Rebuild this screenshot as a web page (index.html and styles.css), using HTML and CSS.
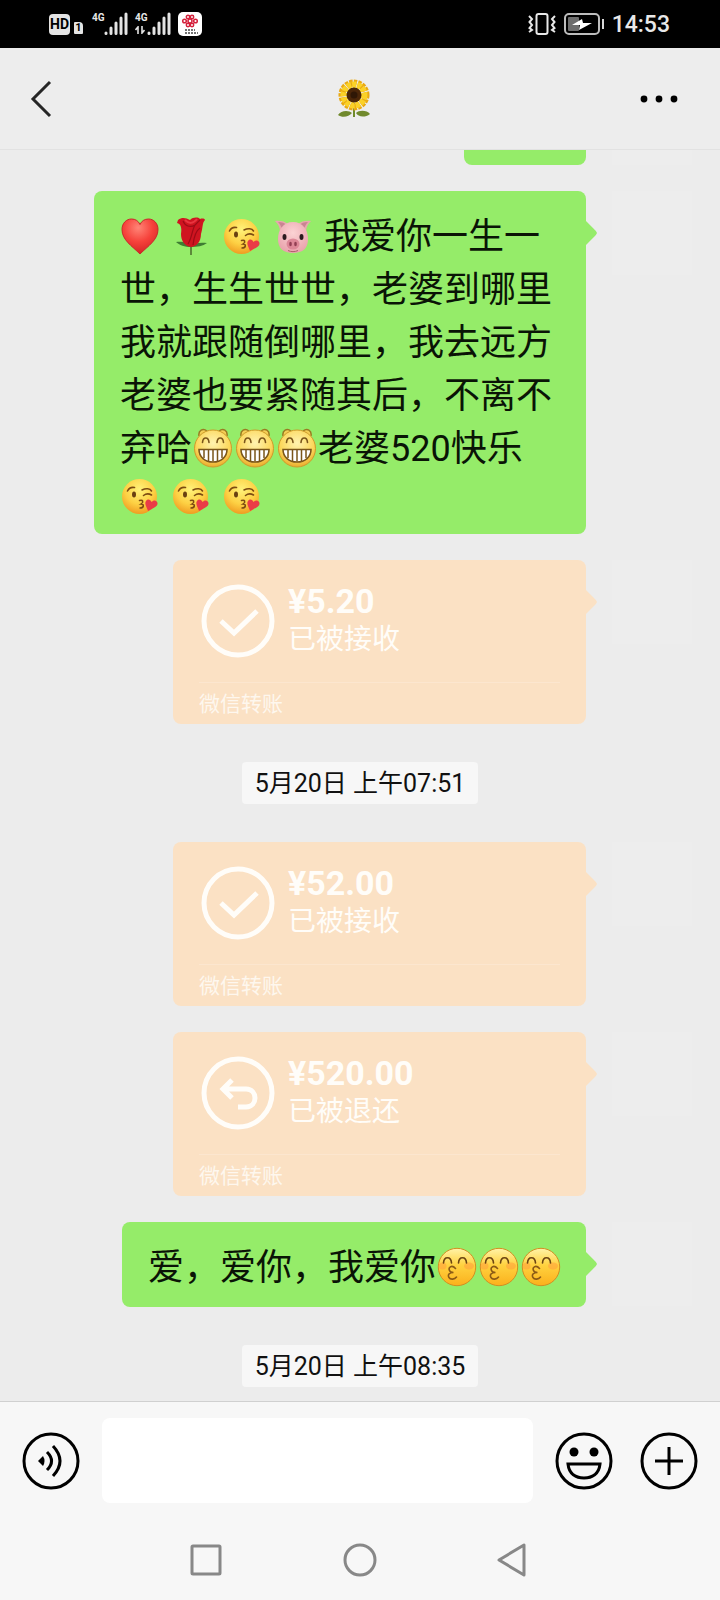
FILE: index.html
```html
<!DOCTYPE html>
<html lang="zh-CN">
<head>
    <meta charset="UTF-8">
    <meta name="viewport" content="width=device-width, initial-scale=1.0">
    <title>🌻</title>
    <link rel="stylesheet" href="styles.css">
</head>
<body>
    <!-- Shared drawings -->
    <svg class="defs" aria-hidden="true">
        <defs>
            <radialGradient id="face" cx="50%" cy="30%" r="70%">
                <stop offset="0" stop-color="#fff27a"/>
                <stop offset="0.6" stop-color="#fdd043"/>
                <stop offset="1" stop-color="#ef9d22"/>
            </radialGradient>
            <radialGradient id="face-light" cx="50%" cy="35%" r="65%">
                <stop offset="0" stop-color="#fff3b0"/>
                <stop offset="0.7" stop-color="#fcd75a"/>
                <stop offset="1" stop-color="#e9ab2c"/>
            </radialGradient>
            <linearGradient id="face-warm" x1="0" y1="0" x2="0" y2="1">
                <stop offset="0" stop-color="#fff3a8"/>
                <stop offset="0.45" stop-color="#ffd23f"/>
                <stop offset="1" stop-color="#fbb01c"/>
            </linearGradient>
            <radialGradient id="red" cx="45%" cy="25%" r="80%">
                <stop offset="0" stop-color="#ff8577"/>
                <stop offset="0.5" stop-color="#f6423b"/>
                <stop offset="1" stop-color="#cf1f22"/>
            </radialGradient>
            <radialGradient id="pink" cx="50%" cy="35%" r="65%">
                <stop offset="0" stop-color="#fbd3d4"/>
                <stop offset="1" stop-color="#e9a3ac"/>
            </radialGradient>

            <symbol id="heart" viewBox="0 0 40 40">
                <path d="M20 38C12 30 2 24 2 13.500C2 7 6.500 3 11.500 3C15.500 3 18.500 5 20 8.500C21.500 5 24.500 3 28.500 3C33.500 3 38 7 38 13.500C38 24 28 30 20 38Z" fill="url(#red)" stroke="#c9282a"/>
            </symbol>
            <symbol id="rose" viewBox="0 0 40 40">
                <path d="M20 27V39" stroke="#5c8a3a" stroke-width="2"/>
                <path d="M20 31C14 31 8 29 5 26C12 25 18 27 20 31C23 27 29 26 36 27C32 30 26 31 20 31Z" fill="#3f7d33"/>
                <path d="M7 4C11 1 15 2 19 4C22 1 27 1 29 3C32 2 34 3 34 4C31 7 32 12 30 18C30 26 25 31 20 31C13 30 10 24 10 18C11 12 10 8 6 7Z" fill="#cf1420"/>
                <path d="M12 5C14 10 19 12 24 9L29 4M24 9C21 14 21 22 17 28M29 12C26 14 23 20 22 29" fill="none" stroke="#9d0b16" stroke-width="1.200"/>
                <path d="M14 4C18 8 22 8 26 3" fill="none" stroke="#e8353f" stroke-width="2"/>
            </symbol>
            <symbol id="kiss" viewBox="0 0 40 40">
                <circle cx="19.500" cy="20.500" r="17.500" fill="url(#face)"/>
                <path d="M7.500 15C9 12 12 11 14.500 11.500M22 14C26 12 30 12.500 31.500 15M23.500 19.500C26 17.500 29 17.500 31.500 19" fill="none" stroke="#7c4b12" stroke-width="1.600" stroke-linecap="round"/>
                <ellipse cx="14" cy="18.500" rx="2" ry="3" fill="#6a4011"/>
                <path d="M19.500 24.500C23 23.500 24 26 21 28C24.500 28 24 32 20 32" fill="none" stroke="#7c4b12" stroke-width="1.500" stroke-linecap="round"/>
                <path d="M28 35C27 31 24 28 26 25C28 22.500 30.500 23.500 31.500 26C33.500 23.500 37 24 37.500 27C38 31 33 32 28 35Z" fill="#ea3c46"/>
            </symbol>
            <symbol id="pig" viewBox="0 0 40 40">
                <path d="M2 5C6 4 12 5 15 8L7 16C7 11 5 8 2 5ZM38 5C34 4 28 5 25 8L33 16C33 11 35 8 38 5Z" fill="#e9a6ae"/>
                <path d="M5 6C9 6 12 7 13 9L9 13C8 10 7 8 5 6ZM35 6C31 6 28 7 27 9L31 13C32 10 33 8 35 6Z" fill="#c98592"/>
                <path d="M20 6C30 6 35 14 35 23C35 32 30 37 20 37C10 37 5 32 5 23C5 14 10 6 20 6Z" fill="url(#pink)"/>
                <ellipse cx="11.500" cy="21" rx="2" ry="3" fill="#2a1a1e"/>
                <ellipse cx="28.500" cy="21" rx="2" ry="3" fill="#2a1a1e"/>
                <ellipse cx="20" cy="28" rx="6.500" ry="5.500" fill="#dd8797"/>
                <ellipse cx="17.500" cy="28" rx="1.300" ry="2.200" fill="#913e52"/>
                <ellipse cx="22.500" cy="28" rx="1.300" ry="2.200" fill="#913e52"/>
                <path d="M15 34.500C18 36 22 36 25 34.500" fill="none" stroke="#b25d6d"/>
            </symbol>
            <symbol id="grin" viewBox="0 0 40 40">
                <path d="M6 8C5 2 10 0 14 3M34 8C35 2 30 0 26 3" fill="#f4cf57" stroke="#9a7b22" stroke-width="1.500"/>
                <circle cx="20" cy="20.500" r="18.500" fill="url(#face-light)" stroke="#d19a2a"/>
                <path d="M9.500 14.500C10 8.500 15.500 8.500 16 14.500M24 14.500C24.500 8.500 30 8.500 30.500 14.500" fill="none" stroke="#7a551a" stroke-width="1.600" stroke-linecap="round"/>
                <path d="M6 21.500H34C34 29 28 34 20 34C12 34 6 29 6 21.500Z" fill="#fff" stroke="#7a551a" stroke-width="1.600"/>
                <path d="M11 22V30M15.500 22V33M20 22V33.500M24.500 22V33M29 22V30" stroke="#7a551a" stroke-width="1.500"/>
            </symbol>
            <symbol id="pout" viewBox="0 0 40 40">
                <circle cx="20" cy="20" r="18.700" fill="url(#face-warm)" stroke="#d18f22" stroke-width="1"/>
                <ellipse cx="5.500" cy="19" rx="4" ry="3.500" fill="#ff9a3d" opacity="0.500"/>
                <ellipse cx="32" cy="19" rx="5" ry="3.500" fill="#ff9a3d" opacity="0.500"/>
                <path d="M6.500 16C7 9 14 9 14.500 16M21.500 16C22 9 29 9 29.500 16" fill="none" stroke="#6b4412" stroke-width="1.600" stroke-linecap="round"/>
                <path d="M18.500 21.500C15 17.500 11 20 12.500 23.500C13 25 14.500 25.500 16.500 25.500C12 25.500 10.500 28 12 30.500C13.500 33 17.500 32.500 19.500 30" fill="none" stroke="#8a5a16" stroke-width="1.600" stroke-linecap="round"/>
            </symbol>
            <symbol id="check" viewBox="0 0 74 74">
                <circle cx="37" cy="37" r="34" fill="none" stroke="currentColor" stroke-width="5"/>
                <path d="M20 37L33 49L56 27" fill="none" stroke="currentColor" stroke-width="5"/>
            </symbol>
            <symbol id="returned" viewBox="0 0 74 74">
                <circle cx="37" cy="37" r="34" fill="none" stroke="currentColor" stroke-width="5"/>
                <path d="M31 24L22 33L31 42M23 33H45C57 33 57 51 45 51H37" fill="none" stroke="currentColor" stroke-width="5"/>
            </symbol>
            <symbol id="bars" viewBox="0 0 24 24">
                <path d="M2 21V21.500M7 16V21.500M12 11V21.500M17 6V21.500M22 2V21.500" stroke="#e4e4e4" stroke-width="3" stroke-linecap="round"/>
            </symbol>
        </defs>
    </svg>

    <div class="app">
        <div class="status-bar">
            <div class="status-left">
                <span class="hd">HD</span>
                <span class="sim">1</span>
                <span class="signal"><span class="net">4G</span><svg class="bars"><use href="#bars"/></svg></span>
                <span class="signal">
                    <span class="net">4G
                        <svg class="updown" viewBox="0 0 10 8"><path d="M0.500 4L3 1V8M7 0V7L9.500 4" fill="none" stroke="#e4e4e4" stroke-width="1.600"/></svg>
                    </span>
                    <svg class="bars"><use href="#bars"/></svg>
                </span>
                <svg class="carrier" viewBox="0 0 24 24">
                    <rect width="24" height="24" rx="5" fill="#fff"/>
                    <g fill="none" stroke="#d5203b" stroke-width="1.500">
                        <circle cx="12" cy="9" r="2"/>
                        <circle cx="10" cy="5" r="1.700"/><circle cx="14" cy="5" r="1.700"/>
                        <circle cx="6.500" cy="9" r="1.800"/><circle cx="17.500" cy="9" r="1.800"/>
                        <circle cx="10" cy="13" r="1.700"/><circle cx="14" cy="13" r="1.700"/>
                    </g>
                    <path d="M7 18H17M7 21H20" stroke="#444" stroke-width="1.500" stroke-dasharray="2 1"/>
                </svg>
            </div>
            <div class="status-right">
                <svg class="vibrate" viewBox="0 0 28 24">
                    <rect x="8.500" y="2" width="11" height="20" rx="2" fill="none" stroke="#e8e8e8" stroke-width="2"/>
                    <path d="M1 4L4 7L1.500 10L4 13L1.500 16L4 18L1 20M27 4L24 7L26.500 10L24 13L26.500 16L24 18L27 20" fill="none" stroke="#e8e8e8" stroke-width="2"/>
                </svg>
                <svg class="battery" viewBox="0 0 40 22">
                    <rect x="1" y="1" width="34" height="20" rx="4" fill="none" stroke="#bdbdbd" stroke-width="2"/>
                    <rect x="4" y="4" width="11" height="14" rx="1" fill="#6d6d6d"/>
                    <path d="M18 6L8 12H16L15 17L28 10H19Z" fill="#fff"/>
                    <path d="M39 6V16" stroke="#d8d8d8" stroke-width="2"/>
                </svg>
                <time class="clock">14:53</time>
            </div>
        </div>

        <header class="header">
            <button class="icon-btn back" aria-label="返回">
                <svg viewBox="0 0 22 38"><path d="M20 2L3 19L20 36" fill="none" stroke="#262626" stroke-width="3"/></svg>
            </button>
            <h1 class="title">
                <svg viewBox="0 0 34 40" role="img" aria-label="🌻">
                    <path d="M17 24V38" stroke="#6f8a2b" stroke-width="2"/>
                    <path d="M1 36C4 31 12 31 15 34C12 38 5 39 1 36ZM33 35C30 31 22 31 19 34C21 38 28 39 33 35Z" fill="#70892d"/>
                    <circle cx="17" cy="16" r="12" fill="none" stroke="#e9a914" stroke-width="7" stroke-dasharray="3 1"/>
                    <circle cx="17" cy="16" r="10" fill="none" stroke="#fbd127" stroke-width="7" stroke-dasharray="4 1"/>
                    <circle cx="17" cy="16" r="7.500" fill="#4b2609"/>
                    <circle cx="17" cy="16" r="3.500" fill="#2f1706"/>
                </svg>
            </h1>
            <button class="icon-btn more" aria-label="更多">
                <svg viewBox="0 0 38 8"><circle cx="4" cy="4" r="3.400"/><circle cx="19" cy="4" r="3.400"/><circle cx="34" cy="4" r="3.400"/></svg>
            </button>
        </header>

        <main class="chat">
            <div class="row">
                <div class="bubble-end"></div>
                <div class="avatar-end"></div>
            </div>

            <div class="row">
                <div class="bubble">
                    <svg class="emoji spaced"><use href="#heart"/></svg><svg class="emoji spaced"><use href="#rose"/></svg><svg class="emoji spaced"><use href="#kiss"/></svg><svg class="emoji spaced"><use href="#pig"/></svg>我爱你一生一世，生生世世，老婆到哪里我就跟随倒哪里，我去远方老婆也要紧随其后，不离不弃哈<svg class="emoji wide"><use href="#grin"/></svg><svg class="emoji wide"><use href="#grin"/></svg><svg class="emoji wide"><use href="#grin"/></svg>老婆520快乐
                    <div class="emoji-line"><svg class="emoji spaced"><use href="#kiss"/></svg><svg class="emoji spaced"><use href="#kiss"/></svg><svg class="emoji spaced"><use href="#kiss"/></svg></div>
                </div>
                <div class="avatar"></div>
            </div>

            <div class="row">
                <div class="transfer">
                    <div class="transfer-main">
                        <svg class="transfer-icon"><use href="#check"/></svg>
                        <div>
                            <div class="amount">¥5.20</div>
                            <div class="state">已被接收</div>
                        </div>
                    </div>
                    <div class="transfer-foot">微信转账</div>
                </div>
                <div class="avatar"></div>
            </div>

            <time class="stamp">5月20日 上午07:51</time>

            <div class="row">
                <div class="transfer">
                    <div class="transfer-main">
                        <svg class="transfer-icon"><use href="#check"/></svg>
                        <div>
                            <div class="amount">¥52.00</div>
                            <div class="state">已被接收</div>
                        </div>
                    </div>
                    <div class="transfer-foot">微信转账</div>
                </div>
                <div class="avatar"></div>
            </div>

            <div class="row">
                <div class="transfer">
                    <div class="transfer-main">
                        <svg class="transfer-icon"><use href="#returned"/></svg>
                        <div>
                            <div class="amount">¥520.00</div>
                            <div class="state">已被退还</div>
                        </div>
                    </div>
                    <div class="transfer-foot">微信转账</div>
                </div>
                <div class="avatar"></div>
            </div>

            <div class="row">
                <div class="bubble">爱，爱你，我爱你<svg class="emoji wide"><use href="#pout"/></svg><svg class="emoji wide"><use href="#pout"/></svg><svg class="emoji wide"><use href="#pout"/></svg></div>
                <div class="avatar"></div>
            </div>

            <time class="stamp">5月20日 上午08:35</time>
        </main>

        <footer class="footer">
            <div class="composer">
                <button class="icon-btn" aria-label="语音">
                    <svg class="tool" viewBox="0 0 58 58">
                        <circle cx="29" cy="29" r="27" fill="none" stroke="#000" stroke-width="3"/>
                        <path d="M16 29L21 24Q24 29 21 34Z"/>
                        <path d="M25 20Q34 29 25 38M31 14Q45 29 31 44" fill="none" stroke="#000" stroke-width="3"/>
                    </svg>
                </button>
                <input class="message" type="text" aria-label="消息">
                <button class="icon-btn" aria-label="表情">
                    <svg class="tool" viewBox="0 0 58 58">
                        <circle cx="29" cy="29" r="27" fill="none" stroke="#000" stroke-width="3"/>
                        <circle cx="19" cy="20" r="4.500"/><circle cx="39" cy="20" r="4.500"/>
                        <path d="M13 32H45C44 42 37 46 29 46C21 46 14 42 13 32Z" fill="none" stroke="#000" stroke-width="3"/>
                    </svg>
                </button>
                <button class="icon-btn" aria-label="添加">
                    <svg class="tool" viewBox="0 0 58 58">
                        <circle cx="29" cy="29" r="27" fill="none" stroke="#000" stroke-width="3"/>
                        <path d="M29 15V43M15 29H43" stroke="#000" stroke-width="3"/>
                    </svg>
                </button>
            </div>
            <nav class="system-nav">
                <button class="icon-btn" aria-label="最近任务"><svg viewBox="0 0 34 34"><rect x="3" y="3" width="28" height="28" rx="1"/></svg></button>
                <button class="icon-btn" aria-label="主页"><svg viewBox="0 0 34 34"><circle cx="17" cy="17" r="15"/></svg></button>
                <button class="icon-btn" aria-label="后退"><svg viewBox="0 0 34 34"><path d="M27 2V32L2 17Z"/></svg></button>
            </nav>
        </footer>
    </div>
</body>
</html>
```

FILE: styles.css
```css
* {
    box-sizing: border-box;
}

body {
    margin: 0;
    background: #ececec;
    color: #0a1406;
    font-family: Roboto, "Noto Sans CJK SC", sans-serif;
}

.defs {
    position: absolute;
    width: 0;
    height: 0;
}

.app {
    display: flex;
    flex-direction: column;
    min-height: 100vh;
}

.icon-btn {
    display: flex;
    padding: 0;
    border: 0;
    background: none;
}

/* Status bar */
.status-bar {
    display: flex;
    justify-content: space-between;
    align-items: center;
    height: 48px;
    padding: 0 50px 0 49px;
    background: #000;
    color: #e8e8e8;
}

.status-left,
.status-right {
    display: flex;
    align-items: center;
}

.hd {
    width: 21px;
    margin-right: 4px;
    border-radius: 4px;
    background: #e4e4e4;
    color: #000;
    font-size: 14px;
    font-weight: bold;
    line-height: 21px;
    text-align: center;
}

.sim {
    align-self: flex-end;
    width: 9px;
    margin: 0 9px 2px 0;
    border-radius: 1px 4px 1px 1px;
    background: #e4e4e4;
    color: #000;
    font-size: 11px;
    font-weight: bold;
    line-height: 12px;
    text-align: center;
}

.signal {
    display: flex;
    margin-right: 7px;
}

.net {
    width: 12px;
    font-size: 10px;
    font-weight: bold;
    line-height: 12px;
}

.updown {
    display: block;
    width: 10px;
    height: 8px;
    margin-top: 2px;
}

.bars,
.carrier {
    width: 24px;
    height: 24px;
}

.vibrate {
    width: 28px;
    height: 24px;
    margin-right: 8px;
}

.battery {
    width: 40px;
    height: 22px;
    margin-right: 8px;
}

.clock {
    font-size: 23px;
    font-weight: 500;
}

/* Header */
.header {
    display: grid;
    grid-template-columns: 1fr auto 1fr;
    align-items: center;
    height: 102px;
    padding: 0 42px 0 30px;
    border-bottom: 1px solid #e2e2e2;
    background: #ededed;
}

.back svg {
    width: 22px;
    height: 38px;
}

.title {
    display: flex;
    margin: 0;
}

.title svg {
    width: 34px;
    height: 40px;
}

.more {
    justify-self: end;
}

.more svg {
    width: 38px;
    height: 8px;
}

/* Messages */
.chat {
    display: flex;
    flex: 1;
    flex-direction: column;
    gap: 26px;
    padding-bottom: 14px;
}

.row {
    display: flex;
    justify-content: flex-end;
    align-items: flex-start;
    gap: 26px;
    padding: 0 28px 0 94px;
}

.avatar,
.avatar-end {
    flex: none;
    width: 80px;
    background: #ededed;
}

.avatar {
    height: 84px;
}

.avatar-end {
    height: 15px;
}

.bubble-end {
    width: 122px;
    height: 15px;
    border-radius: 0 0 8px 8px;
    background: #95ec69;
}

.bubble,
.transfer {
    position: relative;
    border-radius: 8px;
}

.bubble {
    padding: 20px 24px 12px 26px;
    background: #95ec69;
    font-size: 36px;
    line-height: 53px;
}

.transfer {
    width: 413px;
    background: #fbe1c4;
    color: #fffdf9;
}

/* Arrow towards the avatar */
.bubble::after,
.transfer::after {
    content: '';
    position: absolute;
    top: 30px;
    left: 100%;
    width: 11px;
    height: 24px;
    background: inherit;
    clip-path: polygon(0 0, 90% 42%, 100% 50%, 90% 58%, 0 100%);
}

.emoji {
    width: 40px;
    height: 40px;
    vertical-align: -7px;
}

.spaced {
    margin-right: 11px;
}

.wide {
    margin: 0 1px;
}

.emoji-line {
    height: 46px;
    line-height: 40px;
}

/* Transfer cards */
.transfer-main {
    display: flex;
    gap: 13px;
    margin: 0 26px;
    padding: 22px 0 22px 2px;
    border-bottom: 1px solid #fce6cf;
}

.transfer-icon {
    width: 74px;
    height: 74px;
    margin-top: 2px;
}

.amount {
    font-size: 34px;
    font-weight: bold;
    line-height: 38px;
}

.state {
    font-size: 28px;
    line-height: 40px;
}

.amount + .state {
    padding-top: 0;
}

.transfer-foot {
    padding: 1px 26px 0;
    font-size: 21px;
    line-height: 40px;
    opacity: 0.8;
}

.stamp {
    align-self: center;
    margin: 12px 0;
    padding: 1px 13px 0;
    border-radius: 4px;
    background: #f7f7f7;
    color: #111;
    font-size: 25px;
    line-height: 41px;
}

.stamp:last-child {
    margin-bottom: 0;
}

/* Footer */
.footer {
    border-top: 1px solid #d0d0d0;
    background: #f7f7f7;
}

.composer {
    display: flex;
    align-items: center;
    padding: 16px 22px;
    gap: 22px;
}

.tool {
    width: 58px;
    height: 58px;
}

.composer .icon-btn:last-child {
    margin-left: 5px;
}

.message {
    flex: 1;
    min-width: 0;
    height: 85px;
    padding: 0 16px;
    border: 0;
    border-radius: 8px;
    background: #fff;
    font-family: inherit;
    font-size: 36px;
}

.system-nav {
    display: flex;
    justify-content: center;
    gap: 120px;
    padding: 24px 0;
}

.system-nav svg {
    width: 34px;
    height: 34px;
    fill: none;
    stroke: #888;
    stroke-width: 3;
    stroke-linejoin: round;
}
```
